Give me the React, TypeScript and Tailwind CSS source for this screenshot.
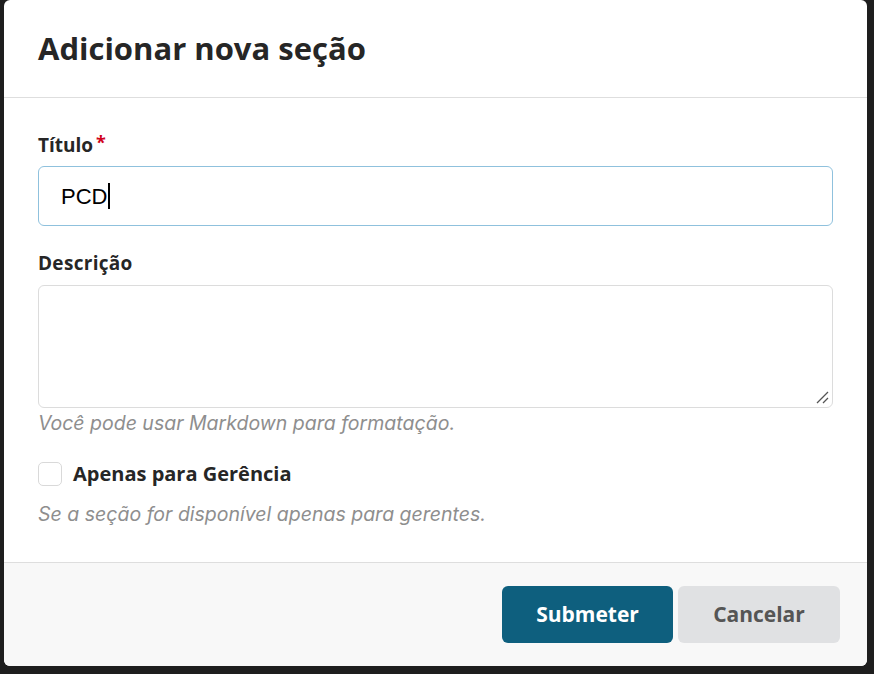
export default function App() {
  const hint = { fontFamily: "Inter, 'Open Sans', sans-serif" };
  return (
    <div
      className="w-[874px] h-[674px] bg-[#1e1e1e] overflow-hidden pl-[4px] pr-[7px] pb-[8px]"
      style={{ fontFamily: "'Open Sans', 'Noto Sans', sans-serif" }}
    >
      <div className="h-full bg-white rounded-md flex flex-col overflow-hidden">
        <header className="h-[98px] shrink-0 border-b border-[#dedede] flex items-center px-[34px]">
          <h2 className="text-[31px] font-bold text-[#262626] leading-none">Adicionar nova seção</h2>
        </header>

        <div className="flex-1 px-[34px] pt-[38px]">
          <label className="flex items-start text-[19px] font-bold text-[#262626] leading-none">
            Título<span className="text-[#d0021b] text-[18px] ml-[3px] -mt-[3px]">*</span>
          </label>
          <div className="mt-[11px] h-[60px] border border-[#8fc1dd] rounded-md flex items-center px-[22px]">
            <span
              className="text-[22px] text-black"
              style={{ fontFamily: "'Liberation Sans', Arial, sans-serif" }}
            >
              PCD
            </span>
            <span className="w-[2px] h-[26px] bg-black ml-[1px]" />
          </div>

          <label className="block mt-[28px] text-[19px] font-bold text-[#262626] leading-none tracking-[0.3px]">
            Descrição
          </label>
          <div className="relative mt-[12px] h-[123px] border border-[#dcdcdc] rounded-md">
            <svg className="absolute right-[3px] bottom-[3px]" width="14" height="14" viewBox="0 0 14 14">
              <path d="M2 13 L13 2 M8 13 L13 8" stroke="#555" strokeWidth="1.3" />
            </svg>
          </div>
          <p className="mt-[2px] text-[19.5px] italic text-[#8e8e8e] leading-[26px]" style={hint}>
            Você pode usar Markdown para formatação.
          </p>

          <div className="mt-[23px] flex items-center gap-[11px]">
            <span className="w-[24px] h-[24px] rounded-[5px] border border-[#d9d9d9] bg-white" />
            <span className="text-[20px] font-bold text-[#262626]">Apenas para Gerência</span>
          </div>
          <p className="mt-[12px] text-[19.5px] italic text-[#8e8e8e] leading-[26px]" style={hint}>
            Se a seção for disponível apenas para gerentes.
          </p>
        </div>

        <footer className="h-[104px] shrink-0 bg-[#f8f8f8] border-t border-[#dedede] flex items-center justify-end gap-[5px] pr-[27px]">
          <button className="w-[171px] h-[57px] rounded-md bg-[#0e5f7e] text-white text-[21px] font-bold">
            Submeter
          </button>
          <button className="w-[162px] h-[57px] rounded-md bg-[#e0e1e3] text-[#555555] text-[21px] font-bold">
            Cancelar
          </button>
        </footer>
      </div>
    </div>
  );
}
